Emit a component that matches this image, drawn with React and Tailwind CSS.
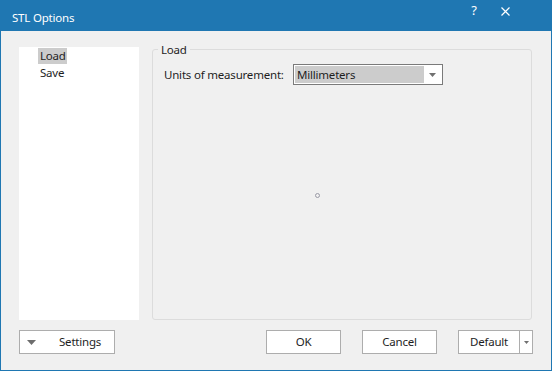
import React from 'react';

const font = { fontFamily: '"Segoe UI", "Noto Sans", "Open Sans", sans-serif' };

const Button = ({ children, className = '' }) => (
     <button className={`h-[24px] border border-[#adadad] bg-white text-[11.5px] tracking-[-0.2px] text-[#1e1e1e] flex items-center justify-center ${className}`}>
          {children}
     </button>
);

const App = () => {
     return (
          <div className="w-[552px] h-[371px] bg-[#1f77b2] flex flex-col" style={font}>
               <div className="h-[31px] flex items-center pl-[12px] pt-[4px] text-white text-[11.5px] tracking-[-0.2px]">
                    <span className="flex-1">STL Options</span>
                    <span className="w-[16px] text-center mr-[19px] -mt-[14px] text-[13px]">?</span>
                    <svg className="mr-[42px] -mt-[12px]" width="9" height="9" viewBox="0 0 9 9">
                         <path d="M0.5 0.5L8.5 8.5M8.5 0.5L0.5 8.5" stroke="#ffffff" strokeWidth="1.2" />
                    </svg>
               </div>
               <div className="flex-1 mx-[1px] mb-[1px] bg-[#f0f0f0] flex flex-col text-[11.5px] tracking-[-0.2px] text-[#1e1e1e]">
                    <div className="flex h-[289px] pt-[16px] pl-[18px] pr-[19px]">
                         <div className="w-[120px] h-full bg-white pt-[1px] pl-[19px]">
                              <div className="w-fit h-[16px] bg-[#cccccc] flex items-center pl-[2px] pr-[1px]">Load</div>
                              <div className="h-[17px] flex items-center pl-[2px]">Save</div>
                         </div>
                         <div className="flex-1 ml-[13px] pt-[2px] relative">
                              <div className="h-full border border-[#dcdcdc] rounded-[3px] pt-[14px] pl-[11px] flex flex-col">
                                   <span className="absolute top-[-6px] left-[6px] px-[3px] bg-[#f0f0f0]">Load</span>
                                   <div className="flex items-center whitespace-nowrap">
                                        <span className="w-[129px]">Units of measurement:</span>
                                        <div className="w-[150px] h-[21px] border border-[#7a7a7a] bg-white p-[1px] flex">
                                             <div className="w-[129px] h-full bg-[#cccccc] pl-[2px] flex items-center">Millimeters</div>
                                             <div className="flex-1 flex items-center justify-center">
                                                  <svg width="7" height="4" viewBox="0 0 7 4"><path d="M0 0h7L3.5 4z" fill="#707070" /></svg>
                                             </div>
                                        </div>
                                   </div>
                                   <div className="flex-1 flex items-center justify-center pb-[14px]">
                                        <div className="w-[5px] h-[5px] rounded-full border border-[#9a9aa6] ml-[-60px]" />
                                   </div>
                              </div>
                         </div>
                    </div>
                    <div className="flex items-start pt-[10px] pl-[18px] pr-[18px]">
                         <Button className="w-[96px] justify-start pl-[7px]">
                              <svg width="9" height="5" viewBox="0 0 9 5"><path d="M0 0h9L4.5 5z" fill="#6d6d6d" /></svg>
                              <span className="ml-[23px]">Settings</span>
                         </Button>
                         <div className="flex-1" />
                         <Button className="w-[75px]">OK</Button>
                         <Button className="w-[75px] ml-[21px]">Cancel</Button>
                         <div className="ml-[21px] flex h-[24px] border border-[#adadad] bg-white">
                              <span className="w-[61px] flex items-center justify-center border-r border-[#adadad]">Default</span>
                              <span className="w-[12px] flex items-center justify-center">
                                   <svg width="5" height="3" viewBox="0 0 5 3"><path d="M0 0h5L2.5 3z" fill="#707070" /></svg>
                              </span>
                         </div>
                    </div>
               </div>
          </div>
     );
};

export default App;
